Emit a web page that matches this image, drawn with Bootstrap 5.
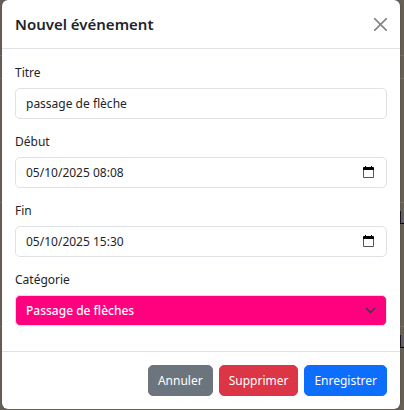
<!DOCTYPE html>
<html lang="fr">
<head>
<meta charset="utf-8">
<meta name="viewport" content="width=device-width, initial-scale=1">
<title>Nouvel événement</title>
<link href="https://cdn.jsdelivr.net/npm/bootstrap@5.3.0/dist/css/bootstrap.min.css" rel="stylesheet">
<style>
  body { background: #665f55; font-family: "Noto Sans", "Open Sans", sans-serif; font-size: 12px; overflow: hidden; }
  .event-dialog { margin: 0 4px 0 2px; max-width: none; position: relative; z-index: 1; }
  .event-dialog .modal-content { background: #fff; border: 0; border-radius: 6px; color: #212529; box-shadow: 0 0 1px #222; }
  .event-dialog .modal-header { padding: 12px 13px; border-bottom: 1px solid #dee2e6; }
  .event-dialog .modal-title { font-size: 15px; line-height: 24px; font-weight: 600; }
  .close-button { line-height: 0; color: #808080; }
  .event-dialog .modal-body { padding: 14px 13px 12px; }
  .field { margin-bottom: 13px; }
  .field .form-label { display: block; line-height: 20px; margin-bottom: 5px; }
  .field .form-control, .field .form-select { height: 31px; padding: 4px 10px; font-size: 12px; line-height: 20px; border-color: #dee2e6; border-radius: 5px; color: #212529; }
  .field .form-select { background-color: #ff007f; color: #fff; font-weight: 500; background-size: 11px; background-position: right 10px center; }
  .date-button { right: 12px; width: 13px; height: 13px; line-height: 0; }
  .event-dialog .modal-footer { padding: 13px; gap: 6px; border-top: 1px solid #dee2e6; }
  .event-dialog .modal-footer .btn { margin: 0; padding: 4px 9px; font-size: 12px; line-height: 21px; font-weight: 400; border-radius: 5px; }
  .day-edge { right: 0; width: 5px; height: 13px; border-left: 2px solid #161329; border-bottom: 1px solid #000; }
  .day-first { top: 211px; }
  .day-second { top: 335px; }
  .week-line { left: 0; right: 0; height: 1px; background: #747067; }
  .week-one { top: 55px; }
  .week-two { top: 78px; }
  .week-three { top: 202px; }
  .week-four { top: 326px; }
</style>
<script src="https://cdn.jsdelivr.net/npm/bootstrap@5.3.0/dist/js/bootstrap.bundle.min.js"></script>
</head>
<body>
<div aria-hidden="true">
  <span class="week-line week-one position-absolute"></span>
  <span class="week-line week-two position-absolute"></span>
  <span class="week-line week-three position-absolute"></span>
  <span class="week-line week-four position-absolute"></span>
  <span class="day-edge day-first position-absolute"></span>
  <span class="day-edge day-second position-absolute"></span>
</div>
<div class="modal-dialog event-dialog" role="dialog" aria-labelledby="eventTitle">
  <form class="modal-content">
    <div class="modal-header d-flex align-items-center justify-content-between">
      <h5 class="modal-title" id="eventTitle">Nouvel événement</h5>
      <button type="button" class="close-button border-0 bg-transparent p-0" aria-label="Fermer">
        <svg width="13" height="13" viewBox="0 0 13 13"><path d="M.6.6l11.8 11.8M12.4.6L.6 12.4" stroke="currentColor" stroke-width="1.5" stroke-linecap="round"/></svg>
      </button>
    </div>
    <div class="modal-body">
      <div class="field">
        <label class="form-label" for="titre">Titre</label>
        <input type="text" class="form-control" id="titre" value="passage de flèche">
      </div>
      <div class="field">
        <label class="form-label" for="debut">Début</label>
        <div class="position-relative d-flex align-items-center">
          <input type="text" class="form-control" id="debut" value="05/10/2025 08:08">
          <button type="button" class="date-button position-absolute border-0 bg-transparent p-0" aria-label="Choisir le début">
            <svg width="13" height="13" viewBox="0 0 13 13"><path fill="#555" d="M1 3h11v8q0 1-1 1H2q-1 0-1-1zM2 4v7h9V4z" fill-rule="evenodd"/><path fill="#000" d="M3 0h1v1h5V0h1v1h1q1 0 1 1v2H1V2q0-1 1-1h1z"/></svg>
          </button>
        </div>
      </div>
      <div class="field">
        <label class="form-label" for="fin">Fin</label>
        <div class="position-relative d-flex align-items-center">
          <input type="text" class="form-control" id="fin" value="05/10/2025 15:30">
          <button type="button" class="date-button position-absolute border-0 bg-transparent p-0" aria-label="Choisir la fin">
            <svg width="13" height="13" viewBox="0 0 13 13"><path fill="#555" d="M1 3h11v8q0 1-1 1H2q-1 0-1-1zM2 4v7h9V4z" fill-rule="evenodd"/><path fill="#000" d="M3 0h1v1h5V0h1v1h1q1 0 1 1v2H1V2q0-1 1-1h1z"/></svg>
          </button>
        </div>
      </div>
      <div class="field">
        <label class="form-label" for="categorie">Catégorie</label>
        <select class="form-select" id="categorie">
          <option selected>Passage de flèches</option>
        </select>
      </div>
    </div>
    <div class="modal-footer d-flex justify-content-end">
      <button type="button" class="btn btn-secondary">Annuler</button>
      <button type="button" class="btn btn-danger">Supprimer</button>
      <button type="submit" class="btn btn-primary">Enregistrer</button>
    </div>
  </form>
</div>
</body>
</html>
